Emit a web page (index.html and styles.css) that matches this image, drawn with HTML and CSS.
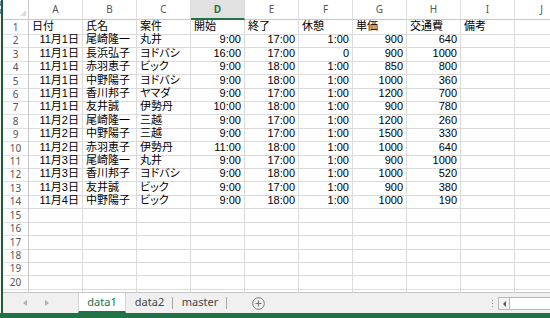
FILE: index.html
```html
<!DOCTYPE html>
<html lang="ja">
<head>
<meta charset="utf-8">
<link rel="stylesheet" href="styles.css">
</head>
<body>
<div class="app">
  <div class="frame">
    <div class="edge"><div class="edge-marks">4<br>4</div></div>
    <div class="main">
      <div class="sheet">
        <div class="row head">
          <div class="corner"><span class="tri"></span></div>
          <div class="ch">A</div><div class="ch">B</div><div class="ch">C</div><div class="ch sel">D</div><div class="ch">E</div><div class="ch">F</div><div class="ch">G</div><div class="ch">H</div><div class="ch">I</div><div class="ch">J</div>
        </div>
        <div class="row"><div class="rh">1</div><div class="c">日付</div><div class="c">氏名</div><div class="c">案件</div><div class="c">開始</div><div class="c">終了</div><div class="c">休憩</div><div class="c">単価</div><div class="c">交通費</div><div class="c">備考</div><div class="c"></div></div>
        <div class="row"><div class="rh">2</div><div class="c n">11月1日</div><div class="c">尾崎隆一</div><div class="c">丸井</div><div class="c n">9:00</div><div class="c n">17:00</div><div class="c n">1:00</div><div class="c n">900</div><div class="c n">640</div><div class="c"></div><div class="c"></div></div>
        <div class="row"><div class="rh">3</div><div class="c n">11月1日</div><div class="c">長浜弘子</div><div class="c kana">ヨドバシ</div><div class="c n">16:00</div><div class="c n">17:00</div><div class="c n">0</div><div class="c n">900</div><div class="c n">1000</div><div class="c"></div><div class="c"></div></div>
        <div class="row"><div class="rh">4</div><div class="c n">11月1日</div><div class="c">赤羽恵子</div><div class="c kana">ビック</div><div class="c n">9:00</div><div class="c n">18:00</div><div class="c n">1:00</div><div class="c n">850</div><div class="c n">800</div><div class="c"></div><div class="c"></div></div>
        <div class="row"><div class="rh">5</div><div class="c n">11月1日</div><div class="c">中野陽子</div><div class="c kana">ヨドバシ</div><div class="c n">9:00</div><div class="c n">18:00</div><div class="c n">1:00</div><div class="c n">1000</div><div class="c n">360</div><div class="c"></div><div class="c"></div></div>
        <div class="row"><div class="rh">6</div><div class="c n">11月1日</div><div class="c">香川邦子</div><div class="c kana">ヤマダ</div><div class="c n">9:00</div><div class="c n">17:00</div><div class="c n">1:00</div><div class="c n">1200</div><div class="c n">700</div><div class="c"></div><div class="c"></div></div>
        <div class="row"><div class="rh">7</div><div class="c n">11月1日</div><div class="c">友井誠</div><div class="c">伊勢丹</div><div class="c n">10:00</div><div class="c n">18:00</div><div class="c n">1:00</div><div class="c n">900</div><div class="c n">780</div><div class="c"></div><div class="c"></div></div>
        <div class="row"><div class="rh">8</div><div class="c n">11月2日</div><div class="c">尾崎隆一</div><div class="c">三越</div><div class="c n">9:00</div><div class="c n">17:00</div><div class="c n">1:00</div><div class="c n">1200</div><div class="c n">260</div><div class="c"></div><div class="c"></div></div>
        <div class="row"><div class="rh">9</div><div class="c n">11月2日</div><div class="c">中野陽子</div><div class="c">三越</div><div class="c n">9:00</div><div class="c n">17:00</div><div class="c n">1:00</div><div class="c n">1500</div><div class="c n">330</div><div class="c"></div><div class="c"></div></div>
        <div class="row"><div class="rh">10</div><div class="c n">11月2日</div><div class="c">赤羽恵子</div><div class="c">伊勢丹</div><div class="c n">11:00</div><div class="c n">18:00</div><div class="c n">1:00</div><div class="c n">1000</div><div class="c n">640</div><div class="c"></div><div class="c"></div></div>
        <div class="row"><div class="rh">11</div><div class="c n">11月3日</div><div class="c">尾崎隆一</div><div class="c">丸井</div><div class="c n">9:00</div><div class="c n">17:00</div><div class="c n">1:00</div><div class="c n">900</div><div class="c n">1000</div><div class="c"></div><div class="c"></div></div>
        <div class="row"><div class="rh">12</div><div class="c n">11月3日</div><div class="c">香川邦子</div><div class="c kana">ヨドバシ</div><div class="c n">9:00</div><div class="c n">18:00</div><div class="c n">1:00</div><div class="c n">1000</div><div class="c n">520</div><div class="c"></div><div class="c"></div></div>
        <div class="row"><div class="rh">13</div><div class="c n">11月3日</div><div class="c">友井誠</div><div class="c kana">ビック</div><div class="c n">9:00</div><div class="c n">17:00</div><div class="c n">1:00</div><div class="c n">900</div><div class="c n">380</div><div class="c"></div><div class="c"></div></div>
        <div class="row"><div class="rh">14</div><div class="c n">11月4日</div><div class="c">中野陽子</div><div class="c kana">ビック</div><div class="c n">9:00</div><div class="c n">18:00</div><div class="c n">1:00</div><div class="c n">1000</div><div class="c n">190</div><div class="c"></div><div class="c"></div></div>
        <div class="row"><div class="rh">15</div><div class="c"></div><div class="c"></div><div class="c"></div><div class="c"></div><div class="c"></div><div class="c"></div><div class="c"></div><div class="c"></div><div class="c"></div><div class="c"></div></div>
        <div class="row"><div class="rh">16</div><div class="c"></div><div class="c"></div><div class="c"></div><div class="c"></div><div class="c"></div><div class="c"></div><div class="c"></div><div class="c"></div><div class="c"></div><div class="c"></div></div>
        <div class="row"><div class="rh">17</div><div class="c"></div><div class="c"></div><div class="c"></div><div class="c"></div><div class="c"></div><div class="c"></div><div class="c"></div><div class="c"></div><div class="c"></div><div class="c"></div></div>
        <div class="row"><div class="rh">18</div><div class="c"></div><div class="c"></div><div class="c"></div><div class="c"></div><div class="c"></div><div class="c"></div><div class="c"></div><div class="c"></div><div class="c"></div><div class="c"></div></div>
        <div class="row"><div class="rh">19</div><div class="c"></div><div class="c"></div><div class="c"></div><div class="c"></div><div class="c"></div><div class="c"></div><div class="c"></div><div class="c"></div><div class="c"></div><div class="c"></div></div>
        <div class="row"><div class="rh">20</div><div class="c"></div><div class="c"></div><div class="c"></div><div class="c"></div><div class="c"></div><div class="c"></div><div class="c"></div><div class="c"></div><div class="c"></div><div class="c"></div></div>
        <div class="row"><div class="rh"></div><div class="c"></div><div class="c"></div><div class="c"></div><div class="c"></div><div class="c"></div><div class="c"></div><div class="c"></div><div class="c"></div><div class="c"></div><div class="c"></div></div>
      </div>
      <div class="tabbar">
        <div class="nav"><span class="arr left"></span><span class="arr right"></span></div>
        <div class="tab active">data1</div>
        <div class="tab sep">data2</div>
        <div class="tab sep wide">master</div>
        <div class="add">
          <svg width="13" height="13" viewBox="0 0 13 13"><circle cx="6.5" cy="6.5" r="5.8" fill="none" stroke="#7a7a7a" stroke-width="1"/><path d="M6.5 3.5v6M3.5 6.5h6" stroke="#7a7a7a" stroke-width="1.2"/></svg>
        </div>
        <div class="spacer"></div>
        <div class="dots"><i></i><i></i><i></i></div>
        <div class="hscroll"><span class="hbtn"><span class="harr"></span></span></div>
      </div>
    </div>
  </div>
  <div class="status"></div>
</div>
</body>
</html>
```

FILE: styles.css
```css
* { box-sizing: border-box; }
html, body { margin: 0; padding: 0; }
body {
  width: 550px;
  height: 318px;
  overflow: hidden;
  background: #ffffff;
  font-family: "Liberation Sans", "Noto Sans CJK JP", sans-serif;
}
.app {
  display: flex;
  flex-direction: column;
  height: 318px;
}
.frame {
  display: flex;
  height: 313px;
}
.edge {
  width: 3px;
  flex: none;
  background: #f3f3f3;
  border-right: 2px solid #1f5c38;
  overflow: hidden;
}
.edge-marks {
  font-size: 8px;
  line-height: 8px;
  margin-left: -3px;
  color: #222;
  font-family: "Liberation Sans", sans-serif;
}
.main {
  flex: 1;
  display: flex;
  flex-direction: column;
  min-width: 0;
}
.sheet {
  height: 292px;
  flex: none;
  overflow: hidden;
}
.row {
  display: grid;
  grid-template-columns: 26px repeat(10, 54px);
  height: 13.42px;
}
.row.head {
  height: 20px;
}
.corner {
  display: flex;
  align-items: flex-end;
  justify-content: flex-end;
  padding: 0 2px 3px 0;
  border-right: 1px solid #c8c8c8;
  border-bottom: 1px solid #c8c8c8;
}
.tri {
  width: 0;
  height: 0;
  border-left: 6px solid transparent;
  border-bottom: 6px solid #dadada;
}
.ch {
  font-family: "Noto Sans", sans-serif;
  font-size: 10px;
  line-height: 19px;
  color: #555;
  text-align: center;
  border-right: 1px solid #dedede;
  border-bottom: 1px solid #c8c8c8;
}
.ch.sel {
  background: #e1e1e1;
  color: #217346;
  font-weight: bold;
  border-bottom: 2px solid #217346;
  line-height: 18px;
}
.rh {
  font-family: "Noto Sans", sans-serif;
  font-size: 10px;
  line-height: 13px;
  color: #555;
  text-align: center;
  border-right: 1px solid #c8c8c8;
  border-bottom: 1px solid #e1e1e1;
  padding-top: 1px;
}
.c {
  font-size: 11px;
  line-height: 13px;
  padding: 0 2px 0 3px;
  color: #000;
  white-space: nowrap;
  overflow: hidden;
  border-right: 1px solid #dadada;
  border-bottom: 1px solid #dadada;
}
.c.n {
  text-align: right;
  padding: 0 3px 0 2px;
}
.kana {
  font-feature-settings: "palt";
}
.tabbar {
  height: 21px;
  flex: none;
  display: flex;
  align-items: stretch;
  background: #f0f0f0;
  border-top: 1px solid #c6c6c6;
  font-family: "Noto Sans", sans-serif;
  font-size: 11px;
}
.nav {
  width: 75px;
  display: flex;
  align-items: center;
  padding-left: 20px;
  gap: 18px;
  height: 20px;
}
.arr {
  width: 0;
  height: 0;
  border-top: 3px solid transparent;
  border-bottom: 3px solid transparent;
}
.arr.left { border-right: 4px solid #b0b0b0; }
.arr.right { border-left: 4px solid #b0b0b0; }
.tab {
  height: 20px;
  line-height: 18px;
  width: 47px;
  text-align: center;
  color: #444;
}
.tab.active {
  width: 48px;
  background: #ffffff;
  color: #217346;
  border-bottom: 2px solid #217346;
  border-left: 1px solid #d4d4d4;
  border-right: 1px solid #d4d4d4;
}
.tab.sep {
  position: relative;
}
.tab.sep::after {
  content: "";
  position: absolute;
  right: 0;
  top: 4px;
  height: 12px;
  border-right: 1px solid #a8a8a8;
}
.tab.wide { width: 54px; }
.add {
  height: 20px;
  display: flex;
  align-items: center;
  margin-left: 25px;
}
.add svg { display: block; }
.spacer { flex: 1; }
.dots {
  height: 20px;
  width: 12px;
  display: flex;
  flex-direction: column;
  align-items: center;
  justify-content: center;
  gap: 2px;
}
.dots i {
  display: block;
  width: 1px;
  height: 1px;
  background: #999;
}
.hscroll {
  margin-top: 4px;
  width: 52px;
  height: 13px;
  background: #ffffff;
  border: 1px solid #b8b8b8;
  border-right: none;
  display: flex;
}
.hbtn {
  width: 11px;
  border-right: 1px solid #b8b8b8;
  display: flex;
  align-items: center;
  justify-content: center;
  background: #f4f4f4;
}
.harr {
  width: 0;
  height: 0;
  border-top: 3px solid transparent;
  border-bottom: 3px solid transparent;
  border-right: 3px solid #555;
}
.status {
  height: 5px;
  background: #217346;
}
```
